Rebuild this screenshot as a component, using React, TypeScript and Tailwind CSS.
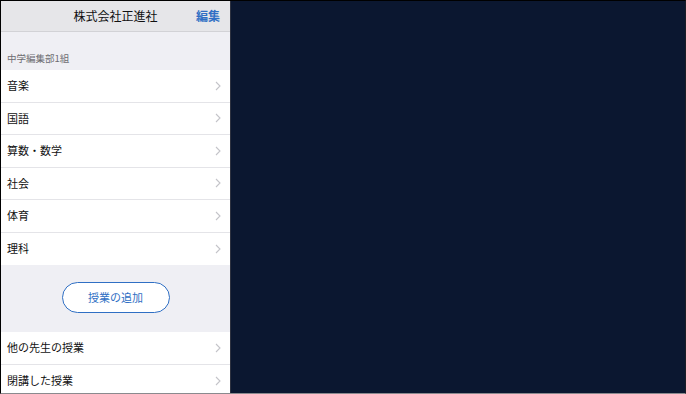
import React from "react";

const font = { fontFamily: '"Noto Sans CJK JP", "Noto Sans", sans-serif' };

function Chevron() {
  return (
    <svg width="6" height="10" viewBox="0 0 6 10" className="shrink-0">
      <path d="M1 1 L5 5 L1 9" fill="none" stroke="#c4c4c9" strokeWidth="1.1" />
    </svg>
  );
}

function Row({ label, last }: { label: string; last?: boolean }) {
  return (
    <div className={`flex h-[32.5px] items-center justify-between bg-white pl-[6px] pr-[9px] ${last ? "" : "border-b border-[#e4e4e8]"}`}>
      <span className="text-[11px] leading-none text-[#111]">{label}</span>
      <Chevron />
    </div>
  );
}

export default function App() {
  const rows = ["音楽", "国語", "算数・数学", "社会", "体育", "理科"];
  return (
    <div style={font} className="flex h-[394px] w-[686px] overflow-hidden border-l border-t border-r border-b border-l-black border-t-black border-r-[#1a1d26] border-b-[#8a8a8e] bg-[#0b1730]">
      <div className="flex w-[230px] shrink-0 flex-col border-r border-[#2e3240] bg-[#efeff4]">
        <div className="relative flex h-[31px] shrink-0 items-center justify-center border-b border-[#d2d2d6] bg-[#e6e6e9]">
          <span className="text-[12px] text-[#111]">株式会社正進社</span>
          <span className="absolute right-[10px] top-1/2 -translate-y-1/2 text-[12px] font-bold text-[#2f6fc4]">編集</span>
        </div>
        <div className="flex h-[38px] shrink-0 items-end pb-[7px] pl-[6px]">
          <span className="text-[9.5px] leading-none text-[#6d6d72]">中学編集部1組</span>
        </div>
        <div className="flex flex-col">
          {rows.map((r, i) => (
            <Row key={r} label={r} last={i === rows.length - 1} />
          ))}
        </div>
        <div className="flex h-[67px] shrink-0 items-center justify-center pb-[2px]">
          <div className="flex h-[31px] w-[108px] items-center justify-center rounded-full border-[1.5px] border-[#2f6fc4] bg-white">
            <span className="text-[11px] text-[#2f6fc4]">授業の追加</span>
          </div>
        </div>
        <div className="flex flex-col">
          <Row label="他の先生の授業" />
          <Row label="閉講した授業" last />
        </div>
      </div>
      <div className="flex-1" />
    </div>
  );
}
